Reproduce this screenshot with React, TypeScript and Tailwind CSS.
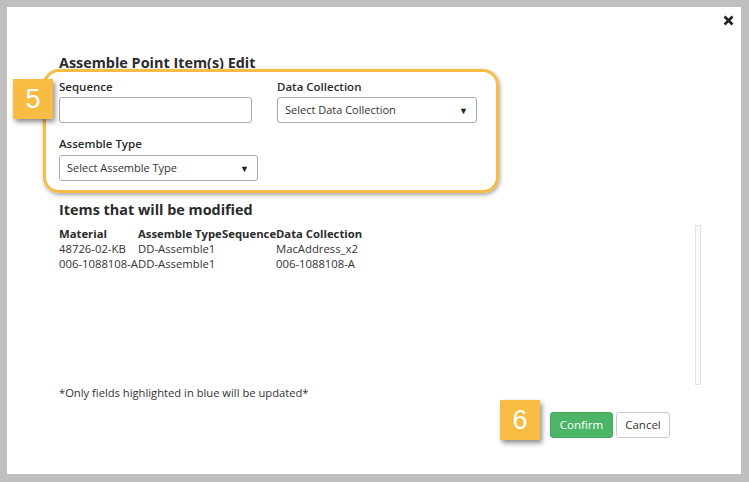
import React from "react";

const font = { fontFamily: '"Open Sans", "Noto Sans", sans-serif' };

function Badge({ n, className }: { n: string; className: string }) {
  return (
    <div
      className={`absolute w-[40px] h-[40px] bg-[#f8bb43] text-white flex items-center justify-center text-[27px] leading-none shadow-[2px_3px_5px_rgba(0,0,0,0.45)] ${className}`}
      style={{ fontFamily: '"Liberation Sans", Arial, sans-serif' }}
    >
      {n}
    </div>
  );
}

function Select({ label, w }: { label: string; w: string }) {
  return (
    <div className={`${w} h-[26px] border border-[#a9a9a9] rounded-[3px] bg-white flex items-center justify-between pl-[7px] pr-[8px] pt-[1px] text-[11px] text-[#333]`}>
      <span>{label}</span>
      <span className="text-[9px] text-[#222]">▼</span>
    </div>
  );
}

export default function App() {
  return (
    <div className="w-[749px] h-[482px] bg-[#bfbfbf] pt-[7px] pl-[7px] pr-[8px] pb-[8px]" style={font}>
      <div className="relative w-full h-full bg-white flex flex-col pl-[52px] pt-[48px] text-[#333]">
        <button className="absolute right-[7px] top-[7px] w-[12px] h-[12px] flex items-center justify-center">
          <svg width="11" height="11" viewBox="0 0 11 11">
            <path d="M1.5 1.5 L9.5 9.5 M9.5 1.5 L1.5 9.5" stroke="#222" strokeWidth="2.6" strokeLinecap="butt" />
          </svg>
        </button>

        <h2 className="text-[14.4px] leading-[16px] font-bold text-[#2b2b2b]">Assemble Point Item(s) Edit</h2>

        <div className="-mt-[2px] -ml-[16px] w-[456px] h-[124px] border-[3px] border-[#f8bb43] rounded-[16px] shadow-[1px_2px_4px_rgba(0,0,0,0.35)] pl-[13px] pt-[7px]">
          <div className="grid grid-cols-[218px_200px]">
            <div className="flex flex-col">
              <label className="text-[11.5px] leading-[15px] font-semibold text-[#2b2b2b]">Sequence</label>
              <div className="mt-[3px] w-[193px] h-[26px] border border-[#a9a9a9] rounded-[3px]" />
            </div>
            <div className="flex flex-col">
              <label className="text-[11.5px] leading-[15px] font-semibold text-[#2b2b2b]">Data Collection</label>
              <div className="mt-[3px]">
                <Select label="Select Data Collection" w="w-[200px]" />
              </div>
            </div>
          </div>
          <div className="mt-[13px] flex flex-col">
            <label className="text-[11.5px] leading-[15px] font-semibold text-[#2b2b2b]">Assemble Type</label>
            <div className="mt-[4px]">
              <Select label="Select Assemble Type" w="w-[199px]" />
            </div>
          </div>
        </div>

        <h3 className="mt-[8px] text-[14.4px] leading-[18px] font-bold text-[#2b2b2b]">Items that will be modified</h3>

        <div className="mt-[6px] flex h-[160px] w-[642px]">
          <div className="flex-1 text-[11.3px] leading-[15px] pt-[1px]">
            <div className="flex font-bold text-[#2b2b2b]">
              <span className="w-[79px] whitespace-nowrap">Material</span>
              <span className="w-[84px] whitespace-nowrap">Assemble Type</span>
              <span className="w-[54px] whitespace-nowrap">Sequence</span>
              <span className="whitespace-nowrap">Data Collection</span>
            </div>
            <div className="flex">
              <span className="w-[79px] whitespace-nowrap">48726-02-KB</span>
              <span className="w-[84px] whitespace-nowrap">DD-Assemble1</span>
              <span className="w-[54px] whitespace-nowrap"></span>
              <span className="whitespace-nowrap">MacAddress_x2</span>
            </div>
            <div className="flex">
              <span className="w-[79px] whitespace-nowrap">006-1088108-A</span>
              <span className="w-[84px] whitespace-nowrap">DD-Assemble1</span>
              <span className="w-[54px] whitespace-nowrap"></span>
              <span className="whitespace-nowrap">006-1088108-A</span>
            </div>
          </div>
          <div className="w-[6px] h-full border border-[#e2e2e2] bg-[#fafafa]" />
        </div>

        <p className="text-[11.2px] leading-[15px] text-[#333]">*Only fields highlighted in blue will be updated*</p>

        <div className="mt-[12px] flex justify-end gap-[3px] w-[611px]">
          <button className="w-[63px] h-[26px] rounded-[3px] bg-[#4cb568] text-white text-[11.5px] border border-[#45a860]">Confirm</button>
          <button className="w-[54px] h-[26px] rounded-[3px] bg-white text-[#333] text-[11.5px] border border-[#cccccc]">Cancel</button>
        </div>

        <Badge n="5" className="left-[6px] top-[72px]" />
        <Badge n="6" className="left-[493px] top-[393px]" />
      </div>
    </div>
  );
}
